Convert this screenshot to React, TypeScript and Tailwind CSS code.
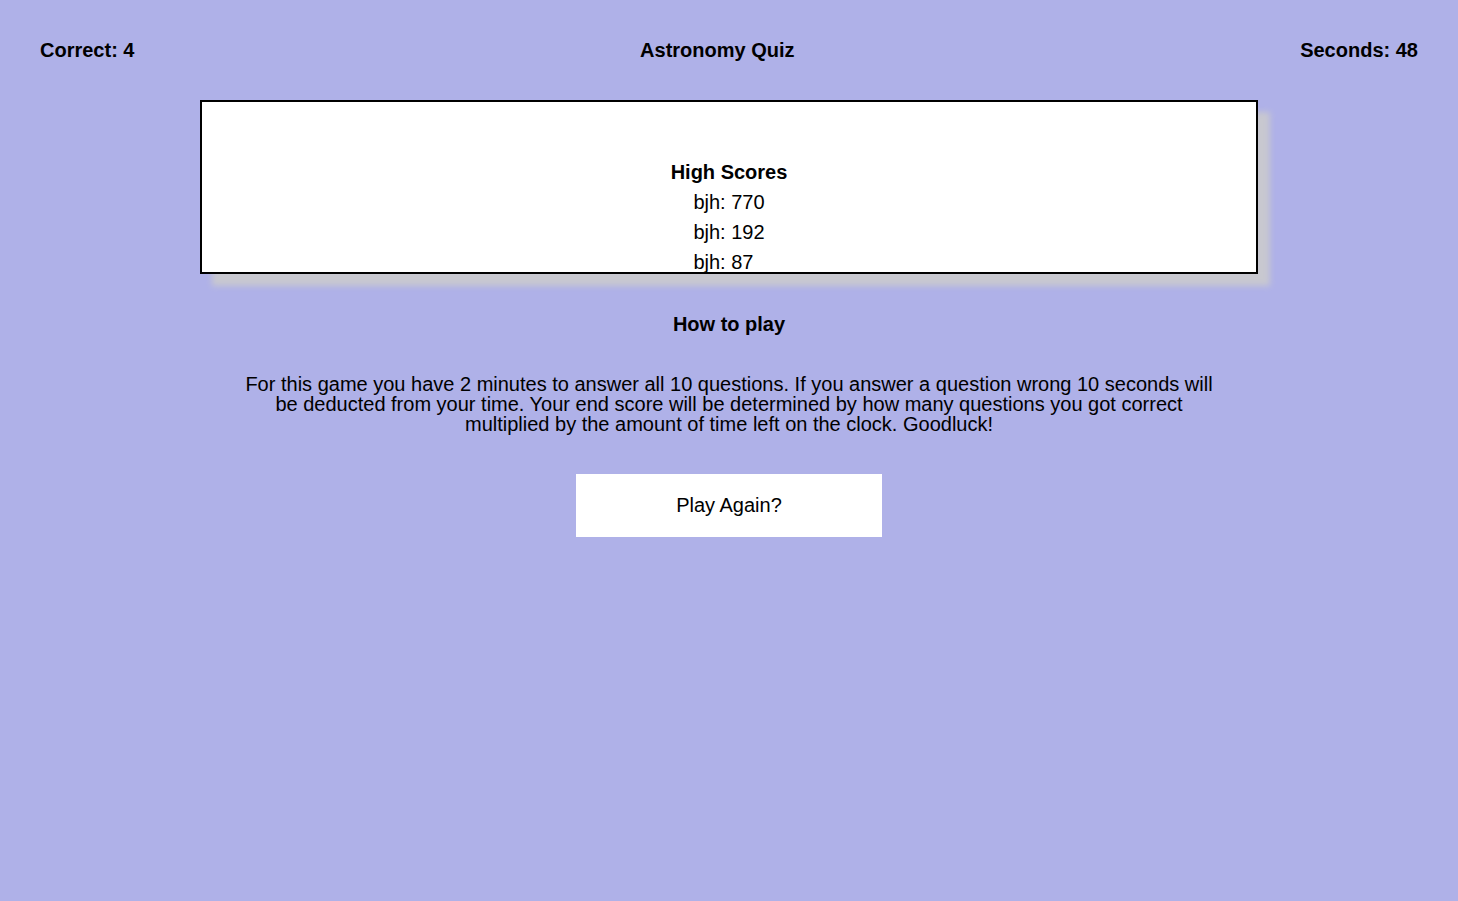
import React from "react";

export default function App() {
  const scores = ["bjh: 770", "bjh: 192", "bjh: 87"];
  return (
    <div
      className="min-h-[901px] w-full bg-[#afb1e8] text-black"
      style={{ fontFamily: '"Liberation Sans", Arial, sans-serif' }}
    >
      <header className="h-[100px] px-10 flex items-center justify-between text-[20px] font-bold">
        <div>Correct: 4</div>
        <div>Astronomy Quiz</div>
        <div>Seconds: 48</div>
      </header>

      <div className="mx-[200px] h-[174px] border-2 border-black bg-white overflow-hidden shadow-[12px_12px_6px_#c8c8d0]">
        <div className="pt-[55px] flex flex-col items-center text-[20px]">
          <div className="font-bold leading-[30px]">High Scores</div>
          <div className="flex flex-col items-start">
            {scores.map((s) => (
              <div key={s} className="leading-[30px]">
                {s}
              </div>
            ))}
          </div>
        </div>
      </div>

      <div className="mt-[35px] text-center text-[20px] font-bold leading-[30px]">
        How to play
      </div>

      <p className="mt-[35px] mx-auto w-[980px] text-center text-[20px] leading-[20px]">
        For this game you have 2 minutes to answer all 10 questions. If you answer a question wrong 10 seconds will be
        deducted from your time. Your end score will be determined by how many questions you got correct multiplied by
        the amount of time left on the clock. Goodluck!
      </p>

      <div className="mt-[40px] flex justify-center">
        <button className="w-[306px] h-[63px] pb-[2px] bg-white text-[20px] text-black">Play Again?</button>
      </div>
    </div>
  );
}
